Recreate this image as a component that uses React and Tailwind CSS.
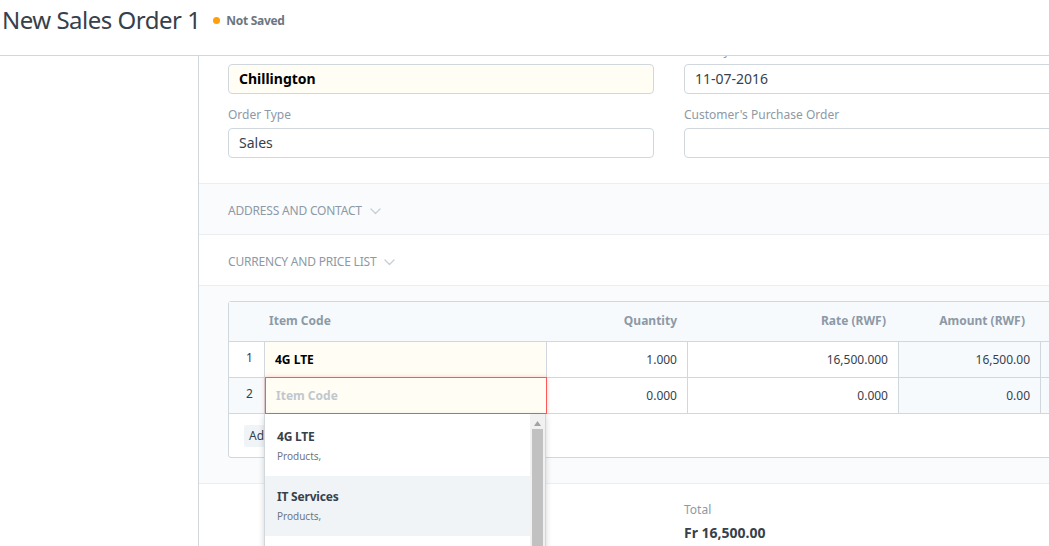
import React from "react";

const font = { fontFamily: '"Noto Sans", "Open Sans", sans-serif' };

function Chevron({ className = "" }) {
  return (
    <svg width="11" height="7" viewBox="0 0 11 7" className={className} fill="none">
      <path d="M1 1l4.5 4.5L10 1" stroke="#c8d0d6" strokeWidth="1.4" strokeLinecap="round" strokeLinejoin="round" />
    </svg>
  );
}

function Field({ label, value, bold, yellow }) {
  return (
    <div>
      <div className="h-[18px] mb-[5px] pt-[1px] text-[12px] leading-[18px] text-[#8d99a6]">{label}</div>
      <div
        className={`h-[30px] border border-[#d1d8dd] rounded-[4px] px-[10px] pb-[1px] flex items-center text-[14px] ${
          yellow ? "bg-[#fffdf4]" : "bg-white"
        } ${bold ? "font-bold text-black" : "text-[#36414c]"}`}
      >
        {value}
      </div>
    </div>
  );
}

function Section({ title, gray }) {
  return (
    <div
      className={`h-[51px] border-b border-[#ebeff2] flex items-center px-[29px] pt-[3px] gap-[8px] ${
        gray ? "bg-[#fafbfc]" : "bg-white"
      }`}
    >
      <span className="text-[12px] text-[#8d99a6] uppercase tracking-[-0.2px]">{title}</span>
      <Chevron className="mt-[1px]" />
    </div>
  );
}

export default function App() {
  return (
    <div className="w-[1049px] h-[546px] overflow-hidden bg-white relative" style={font}>
      <header className="h-[56px] border-b border-[#d1d8dd] bg-white flex items-start">
        <div className="h-[40px] flex items-center pl-[2px]">
          <h1 className="text-[24px] leading-[40px] text-[#36414c] tracking-[-0.5px]">New Sales Order 1</h1>
          <div className="flex items-center ml-[13px] mt-[1px]">
            <span className="w-[7px] h-[7px] rounded-full bg-[#ffa00a]" />
            <span className="ml-[6px] text-[12px] font-bold text-[#6c7680] tracking-[-0.3px]">Not Saved</span>
          </div>
        </div>
      </header>

      <div className="flex h-[490px] overflow-hidden">
        <aside className="w-[199px] shrink-0 border-r border-[#d1d8dd]" />
        <main className="w-[940px] shrink-0">
          <div className="-mt-[15px]">
            {/* Form section */}
            <div className="px-[29px] pb-[25px] border-b border-[#ebeff2]">
              <div className="grid grid-cols-2 gap-x-[30px] gap-y-[11px]">
                <Field label="Customer" value="Chillington" bold yellow />
                <Field label="Delivery Date" value="11-07-2016" />
                <Field label="Order Type" value="Sales" />
                <Field label="Customer's Purchase Order" value="" />
              </div>
            </div>

            <Section title="Address and Contact" gray />
            <Section title="Currency and Price List" />

            {/* Items table section */}
            <div className="bg-[#fafbfc] px-[29px] pt-[15px] pb-[25px] border-b border-[#ebeff2]">
              <div className="relative border border-[#d1d8dd] rounded-[3px] bg-white">
                {/* header */}
                <div className="flex h-[40px] pb-[2px] bg-[#f7fafc] border-b border-[#d1d8dd] text-[12px] font-bold text-[#8d99a6]">
                  <div className="w-[36px]" />
                  <div className="w-[282px] flex items-center pl-[4px]">Item Code</div>
                  <div className="w-[141px] flex items-center justify-end pr-[11px]">Quantity</div>
                  <div className="w-[211px] flex items-center justify-end pr-[13px]">Rate (RWF)</div>
                  <div className="w-[142px] flex items-center justify-end pr-[16px]">Amount (RWF)</div>
                  <div className="flex-1" />
                </div>
                {/* row 1 */}
                <div className="flex h-[36px] border-b border-[#d1d8dd] text-[12px] text-[#36414c]">
                  <div className="w-[36px] border-r border-[#d1d8dd] flex justify-center pt-[7px] pl-[6px]">1</div>
                  <div className="w-[282px] border-r border-[#d1d8dd] bg-[#fffdf4] flex items-center pl-[10px] font-bold text-black">
                    4G LTE
                  </div>
                  <div className="w-[141px] border-r border-[#d1d8dd] flex items-center justify-end pr-[10px]">1.000</div>
                  <div className="w-[211px] border-r border-[#d1d8dd] flex items-center justify-end pr-[10px]">16,500.000</div>
                  <div className="w-[142px] border-r border-[#d1d8dd] bg-[#f7fafc] flex items-center justify-end pr-[10px]">
                    16,500.00
                  </div>
                  <div className="flex-1 bg-[#f7fafc]" />
                </div>
                {/* row 2 */}
                <div className="flex h-[36px] border-b border-[#d1d8dd] text-[12px] text-[#36414c]">
                  <div className="w-[36px] border-r border-[#d1d8dd] bg-[#f7fafc] flex justify-center pt-[7px] pl-[6px]">2</div>
                  <div className="w-[282px] relative bg-[#fffdf4] flex items-center pl-[11px] text-[#c0c8ce] font-bold">
                    <div className="absolute inset-x-0 -top-[1px] -bottom-[1px] border border-[#ff5858] shadow-[0_0_4px_rgba(255,88,88,0.35)]" />
                    Item Code
                  </div>
                  <div className="w-[141px] border-r border-[#d1d8dd] flex items-center justify-end pr-[10px]">0.000</div>
                  <div className="w-[211px] border-r border-[#d1d8dd] flex items-center justify-end pr-[10px]">0.000</div>
                  <div className="w-[142px] border-r border-[#d1d8dd] bg-[#f7fafc] flex items-center justify-end pr-[10px]">
                    0.00
                  </div>
                  <div className="flex-1 bg-[#f7fafc]" />
                </div>
                {/* footer */}
                <div className="h-[43px] flex items-center pl-[15px]">
                  <button className="h-[22px] px-[5px] rounded-[3px] bg-[#f0f4f7] text-[12px] text-[#36414c]">Add Row</button>
                </div>

                {/* autocomplete dropdown */}
                <div className="absolute left-[35px] top-[112px] w-[282px] h-[200px] bg-white border border-[#d1d8dd] border-t-0 shadow-[0_2px_6px_rgba(0,0,0,0.18)] flex z-10">
                  <div className="flex-1 flex flex-col pt-[1px]">
                    <div className="h-[61px] pl-[12px] pt-[14px]">
                      <div className="text-[12px] font-bold text-[#36414c] leading-[16px] tracking-[-0.2px]">4G LTE</div>
                      <div className="text-[10px] text-[#6c7680] leading-[14px] mt-[4px]">Products,</div>
                    </div>
                    <div className="h-[60px] pl-[12px] pt-[13px] bg-[#f0f4f7]">
                      <div className="text-[12px] font-bold text-[#36414c] leading-[16px] tracking-[-0.2px]">IT Services</div>
                      <div className="text-[10px] text-[#6c7680] leading-[14px] mt-[4px]">Products,</div>
                    </div>
                  </div>
                  <div className="w-[15px] bg-[#f1f1f1] flex flex-col items-center">
                    <svg width="7" height="5" viewBox="0 0 7 5" className="mt-[7px]">
                      <path d="M0 5L3.5 0L7 5Z" fill="#a3a3a3" />
                    </svg>
                    <div className="w-[11px] flex-1 bg-[#c1c1c1] mt-[3px]" />
                  </div>
                </div>
              </div>
            </div>

            {/* totals */}
            <div className="px-[29px] pt-[17px] grid grid-cols-2 gap-x-[30px]">
              <div />
              <div>
                <div className="text-[12px] text-[#8d99a6] leading-[18px]">Total</div>
                <div className="text-[14px] font-bold text-[#36414c] leading-[20px] mt-[4px]">Fr 16,500.00</div>
              </div>
            </div>
          </div>
        </main>
      </div>
    </div>
  );
}
